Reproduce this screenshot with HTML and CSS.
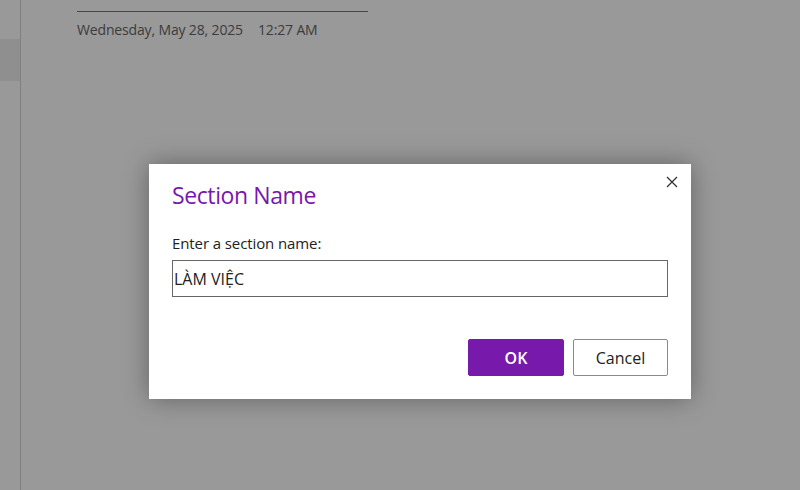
FILE: index.html
```html
<!DOCTYPE html>
<html lang="en">
<head>
    <meta charset="UTF-8">
    <title>Section Name</title>
    <link rel="stylesheet" href="styles.css">
</head>
<body>
    <div class="app">
        <aside class="sections">
            <div class="section-tab"></div>
        </aside>
        <main class="page">
            <div class="page-title"></div>
            <div class="page-date">
                <span>Wednesday, May 28, 2025</span>
                <span>12:27 AM</span>
            </div>
        </main>
    </div>

    <div class="overlay">
        <div class="dialog">
            <div class="dialog-head">
                <h1 class="dialog-title">Section Name</h1>
                <button class="close" aria-label="Close">
                    <svg width="12" height="12" viewBox="0 0 12 12">
                        <path d="M1 1 L11 11 M11 1 L1 11" stroke="#333" stroke-width="1.3" fill="none"/>
                    </svg>
                </button>
            </div>
            <label for="sectionName" class="label">Enter a section name:</label>
            <input type="text" id="sectionName" class="input-field" value="LÀM VIỆC">
            <div class="actions">
                <button class="button primary">OK</button>
                <button class="button">Cancel</button>
            </div>
        </div>
    </div>
</body>
</html>
```

FILE: styles.css
```css
body {
    margin: 0;
    font-family: "Open Sans", "Noto Sans", sans-serif;
    background-color: #fff;
    width: 800px;
    height: 490px;
    overflow: hidden;
    position: relative;
}
.app {
    display: flex;
    height: 490px;
}
.sections {
    width: 20px;
    border-right: 1px solid #d6d6d6;
    padding-top: 39px;
}
.section-tab {
    height: 42px;
    background-color: #efefef;
}
.page {
    padding: 11px 0 0 56px;
}
.page-title {
    width: 291px;
    border-top: 1px solid #777;
}
.page-date {
    margin-top: 8px;
    font-size: 14px;
    color: #666;
    display: flex;
    gap: 15px;
    letter-spacing: -0.15px;
}
/* dim layer behind the dialog */
.overlay {
    position: absolute;
    inset: 0;
    background-color: rgba(0, 0, 0, 0.4);
    padding: 164px 0 0 149px;
}
.dialog {
    width: 542px;
    height: 235px;
    box-sizing: border-box;
    background-color: #fff;
    padding: 14px 23px 0 23px;
    box-shadow: 0 0 24px rgba(0, 0, 0, 0.35);
    display: flex;
    flex-direction: column;
}
.dialog-head {
    display: flex;
    justify-content: space-between;
    align-items: flex-start;
}
.dialog-title {
    margin: 0;
    font-size: 23px;
    font-weight: 500;
    color: #7719aa;
    letter-spacing: -0.4px;
    line-height: 34px;
}
.close {
    border: none;
    background: none;
    padding: 0;
    margin: -6px -14px 0 0;
    width: 20px;
    height: 20px;
    display: flex;
    align-items: center;
    justify-content: center;
}
.label {
    margin-top: 21px;
    font-size: 15px;
    color: #222;
    line-height: 20px;
    letter-spacing: -0.1px;
}
.input-field {
    margin-top: 7px;
    height: 37px;
    box-sizing: border-box;
    border: 1px solid #666;
    padding: 0 1px;
    font-family: inherit;
    font-size: 16px;
    color: #222;
    outline: none;
}
.actions {
    display: flex;
    justify-content: flex-end;
    gap: 9px;
    margin-top: 42px;
}
.button {
    width: 95px;
    height: 37px;
    box-sizing: border-box;
    border: 1px solid #8a8a8a;
    border-radius: 2px;
    background-color: #fff;
    font-family: inherit;
    font-size: 16px;
    color: #222;
}
.button.primary {
    width: 96px;
    border-color: #7719aa;
    background-color: #7719aa;
    color: #fff;
    font-weight: 600;
}
```
